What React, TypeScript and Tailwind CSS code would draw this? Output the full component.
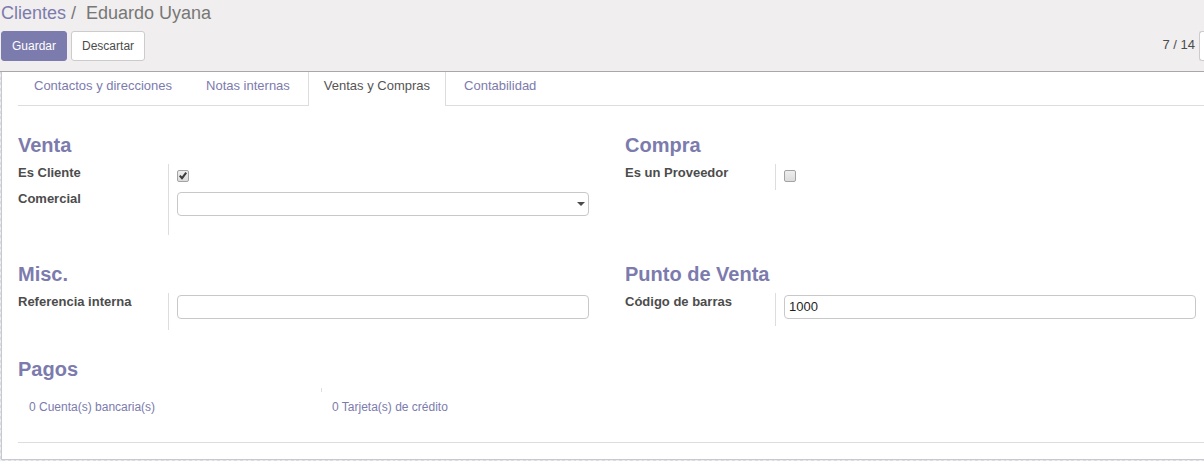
import { useState, type ReactNode } from "react";

const tabs = ["Contactos y direcciones", "Notas internas", "Ventas y Compras", "Contabilidad"];

const inputClass =
  "h-6 w-full appearance-none rounded border border-[#c8c8c8] bg-white px-1 pb-0.5 text-[13px] text-[#1f1f1f] outline-none";

function Heading({ children }: { children: ReactNode }) {
  return <h2 className="mb-1.5 text-xl leading-[26px] font-bold text-[#7c7bad]">{children}</h2>;
}

function Row({ id, label, children }: { id: string; label: string; children: ReactNode }) {
  return (
    <div className="flex">
      <label htmlFor={id} className="w-[150px] shrink-0 text-[13px] leading-[18px] font-bold text-[#4c4c4c]">
        {label}
      </label>
      <div className="min-w-0 flex-1 border-l border-[#dddddd] pl-2">{children}</div>
    </div>
  );
}

function Checkbox({ id, defaultChecked = false }: { id: string; defaultChecked?: boolean }) {
  return (
    <div className="h-[26px] pt-1.5">
      <div className="relative size-3">
        <input
          id={id}
          type="checkbox"
          defaultChecked={defaultChecked}
          className="peer block size-3 appearance-none rounded-[2px] border border-[#a3a3a3] bg-linear-to-b from-[#eeeeee] to-[#dcdcdc]"
        />
        <svg viewBox="0 0 12 12" className="pointer-events-none absolute inset-0 hidden size-3 peer-checked:block">
          <path d="M2 6.3 3.5 5 5 6.5 8.4 2 10 3.2 5.4 9.5H4.7z" fill="#3c3c3c" />
        </svg>
      </div>
    </div>
  );
}

export default function App() {
  const [active, setActive] = useState("Ventas y Compras");

  return (
    <div className="overflow-hidden bg-[#e3e3e5] font-['Liberation_Sans',Arial,sans-serif] text-[13px] text-[#4c4c4c]">
      <header className="border-b border-[#a8a8a8] bg-[#f0eeee] pb-2.5 pl-px">
        <nav aria-label="Ruta" className="pb-[5px] text-lg leading-[26px] text-[#777777]">
          <a href="#clientes" className="text-[#7c7bad]">Clientes</a>
          <span className="mr-2.5 ml-[5px]">/</span>
          <span>Eduardo Uyana</span>
        </nav>
        <div className="flex items-start justify-between">
          <div className="flex gap-1 text-xs">
            <button type="button" className="h-[30px] rounded-[3px] border border-[#7c7bad] bg-[#7c7bad] px-2.5 text-white">
              Guardar
            </button>
            <button type="button" className="h-[30px] rounded-[3px] border border-[#cccccc] bg-white px-2.5 text-[#4c4c4c]">
              Descartar
            </button>
          </div>
          <div className="flex gap-1">
            <span className="leading-7">7 / 14</span>
            <button
              type="button"
              aria-label="Anterior"
              className="h-[30px] w-[5px] rounded-l-[3px] border border-r-0 border-[#cccccc] bg-white"
            />
          </div>
        </div>
      </header>

      <div className="bg-[repeating-linear-gradient(45deg,#eeeeee_0_2px,#dcdcdf_2px_4px)] pb-px pl-px">
        <main className="border-b border-l border-[#c8c8d3] bg-white pb-4 pl-4">
          <div role="tablist" className="flex gap-0.5 border-b border-[#dddddd]">
            {tabs.map((tab) => (
              <button
                key={tab}
                type="button"
                role="tab"
                aria-selected={tab === active}
                onClick={() => setActive(tab)}
                className={
                  tab === active
                    ? "-mb-px h-[34px] border-x border-[#dddddd] bg-white px-[15px] pb-1.5 text-[#555555]"
                    : "h-[33px] border-x border-transparent px-[15px] pb-[5px] text-[#7c7bad]"
                }
              >
                {tab}
              </button>
            ))}
          </div>

          <div className="flex flex-col gap-[26px] border-b border-[#dddddd] pt-[26px] pr-2 pb-[25px]">
            <div className="grid grid-cols-2 items-start gap-9">
              <section>
                <Heading>Venta</Heading>
                <Row id="cliente" label="Es Cliente">
                  <Checkbox id="cliente" defaultChecked />
                </Row>
                <Row id="comercial" label="Comercial">
                  <div className="relative pt-0.5 pb-[19px]">
                    <select id="comercial" className={`block ${inputClass}`}>
                      <option value=""></option>
                    </select>
                    <svg viewBox="0 0 8 4" className="pointer-events-none absolute top-3 right-1 h-1 w-2">
                      <path d="M0 0h8L4 4z" fill="#4c4c4c" />
                    </svg>
                  </div>
                </Row>
              </section>
              <section>
                <Heading>Compra</Heading>
                <Row id="proveedor" label="Es un Proveedor">
                  <Checkbox id="proveedor" />
                </Row>
              </section>
            </div>

            <div className="grid grid-cols-2 items-start gap-9">
              <section>
                <Heading>Misc.</Heading>
                <Row id="referencia" label="Referencia interna">
                  <div className="pt-0.5 pb-[11px]">
                    <input id="referencia" type="text" className={`block ${inputClass}`} />
                  </div>
                </Row>
              </section>
              <section>
                <Heading>Punto de Venta</Heading>
                <Row id="barras" label="Código de barras">
                  <div className="pt-0.5 pb-[7px]">
                    <input id="barras" type="text" defaultValue="1000" className={`block ${inputClass}`} />
                  </div>
                </Row>
              </section>
            </div>

            <section>
              <Heading>Pagos</Heading>
              <div className="grid grid-cols-[303px_1fr] text-xs">
                <div className="col-start-2 h-1 border-l border-[#dddddd]" />
                <a href="#cuentas" className="col-start-1 row-start-2 pt-[5px] pl-[11px] leading-5 text-[#7c7bad]">
                  0 Cuenta(s) bancaria(s)
                </a>
                <a href="#tarjetas" className="col-start-2 row-start-2 pt-[5px] pl-[11px] leading-5 text-[#7c7bad]">
                  0 Tarjeta(s) de crédito
                </a>
              </div>
            </section>
          </div>
        </main>
      </div>
    </div>
  );
}
